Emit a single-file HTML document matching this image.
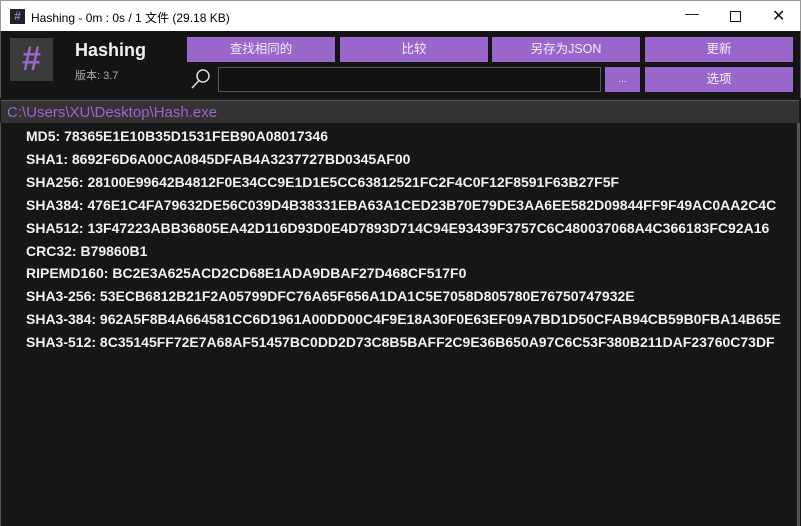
<!DOCTYPE html>
<html><head><meta charset="utf-8"><style>
*{margin:0;padding:0;box-sizing:border-box}
body{width:801px;height:526px;overflow:hidden;background:#161616;font-family:"Liberation Sans","Noto Sans CJK SC",sans-serif;position:relative}
.title{position:absolute;left:0;top:0;width:801px;height:31px;background:#fff;border:1px solid #999;border-bottom:none}
.title .t{position:absolute;left:30px;top:8px;font-size:12px;color:#000}
.ico{position:absolute;left:9px;top:8px;width:15px;height:15px;background:#222;color:#a070d0;font-size:12px;font-weight:bold;text-align:center;line-height:15px}
.wc{position:absolute;top:6px;font-size:14px;color:#111}
.head{position:absolute;left:0;top:31px;width:801px;height:67px;background:#141414;border-left:1px solid #555;border-right:1px solid #555}
.logo{position:absolute;left:10px;top:38px;width:43px;height:43px;background:#3a3a3a;overflow:hidden}
.logo:before{content:"";position:absolute;left:-10px;top:34px;width:80px;height:30px;background:#000;transform:rotate(45deg);transform-origin:0 0}
.logo span{position:absolute;left:0;top:0;width:43px;text-align:center;color:#9a66cc;font-weight:bold;font-size:34px;line-height:43px}
.name{position:absolute;left:75px;top:40px;color:#f0f0f0;font-size:18px;font-weight:bold}
.ver{position:absolute;left:75px;top:67px;color:#aaa;font-size:11px}
.btn{position:absolute;background:#9966cc;color:#f4f0f8;font-size:12.5px;text-align:center;line-height:25px;height:25px}
.inp{position:absolute;left:218px;top:67px;width:383px;height:25px;border:1px solid #555;background:#111}
.path{position:absolute;left:1px;top:100px;width:798px;height:23px;background:#333;border-top:1px solid #555;color:#9a66cc;font-size:15px;line-height:23px;padding-left:6px}
.lines{position:absolute;left:26px;top:125px;width:771px;overflow:hidden;color:#f2f2f2;font-size:14px;font-weight:bold;line-height:22.9px;white-space:nowrap}
.sb{position:absolute;left:797px;top:123px;width:3px;height:403px;background:#555}
.lb{position:absolute;left:0;top:123px;width:1px;height:403px;background:#555}
</style></head><body>
<div class="title"><div class="ico">#</div><div class="t">Hashing - 0m : 0s / 1 文件 (29.18 KB)</div>
<div class="wc" style="left:684px;top:4px">—</div>
<div class="wc" style="left:729px;width:11px;height:11px;border:1px solid #111;top:10px"></div>
<div class="wc" style="left:771px;top:5px;font-size:16px">✕</div></div>
<div class="head"></div>
<div class="logo"><span>#</span></div>
<div class="name">Hashing</div>
<div class="ver">版本: 3.7</div>
<div class="btn" style="left:187px;top:37px;width:148px">查找相同的</div>
<div class="btn" style="left:340px;top:37px;width:148px">比较</div>
<div class="btn" style="left:492px;top:37px;width:148px">另存为JSON</div>
<div class="btn" style="left:645px;top:37px;width:148px">更新</div>
<svg style="position:absolute;left:190px;top:67px" width="22" height="26"><circle cx="13" cy="9" r="6" fill="none" stroke="#ddd" stroke-width="1.5"/><line x1="9" y1="13.5" x2="2" y2="21" stroke="#ddd" stroke-width="1.6"/></svg>
<div class="inp"></div>
<div class="btn" style="left:605px;top:67px;width:35px;font-size:10px">...</div>
<div class="btn" style="left:645px;top:67px;width:148px">选项</div>
<div class="path">C:\Users\XU\Desktop\Hash.exe</div>
<div class="lb"></div><div class="sb"></div>
<div class="lines">
MD5: 78365E1E10B35D1531FEB90A08017346<br>
SHA1: 8692F6D6A00CA0845DFAB4A3237727BD0345AF00<br>
SHA256: 28100E99642B4812F0E34CC9E1D1E5CC63812521FC2F4C0F12F8591F63B27F5F<br>
SHA384: 476E1C4FA79632DE56C039D4B38331EBA63A1CED23B70E79DE3AA6EE582D09844FF9F49AC0AA2C4C<br>
SHA512: 13F47223ABB36805EA42D116D93D0E4D7893D714C94E93439F3757C6C480037068A4C366183FC92A16<br>
CRC32: B79860B1<br>
RIPEMD160: BC2E3A625ACD2CD68E1ADA9DBAF27D468CF517F0<br>
SHA3-256: 53ECB6812B21F2A05799DFC76A65F656A1DA1C5E7058D805780E76750747932E<br>
SHA3-384: 962A5F8B4A664581CC6D1961A00DD00C4F9E18A30F0E63EF09A7BD1D50CFAB94CB59B0FBA14B65E<br>
SHA3-512: 8C35145FF72E7A68AF51457BC0DD2D73C8B5BAFF2C9E36B650A97C6C53F380B211DAF23760C73DF
</div>
</body></html>
